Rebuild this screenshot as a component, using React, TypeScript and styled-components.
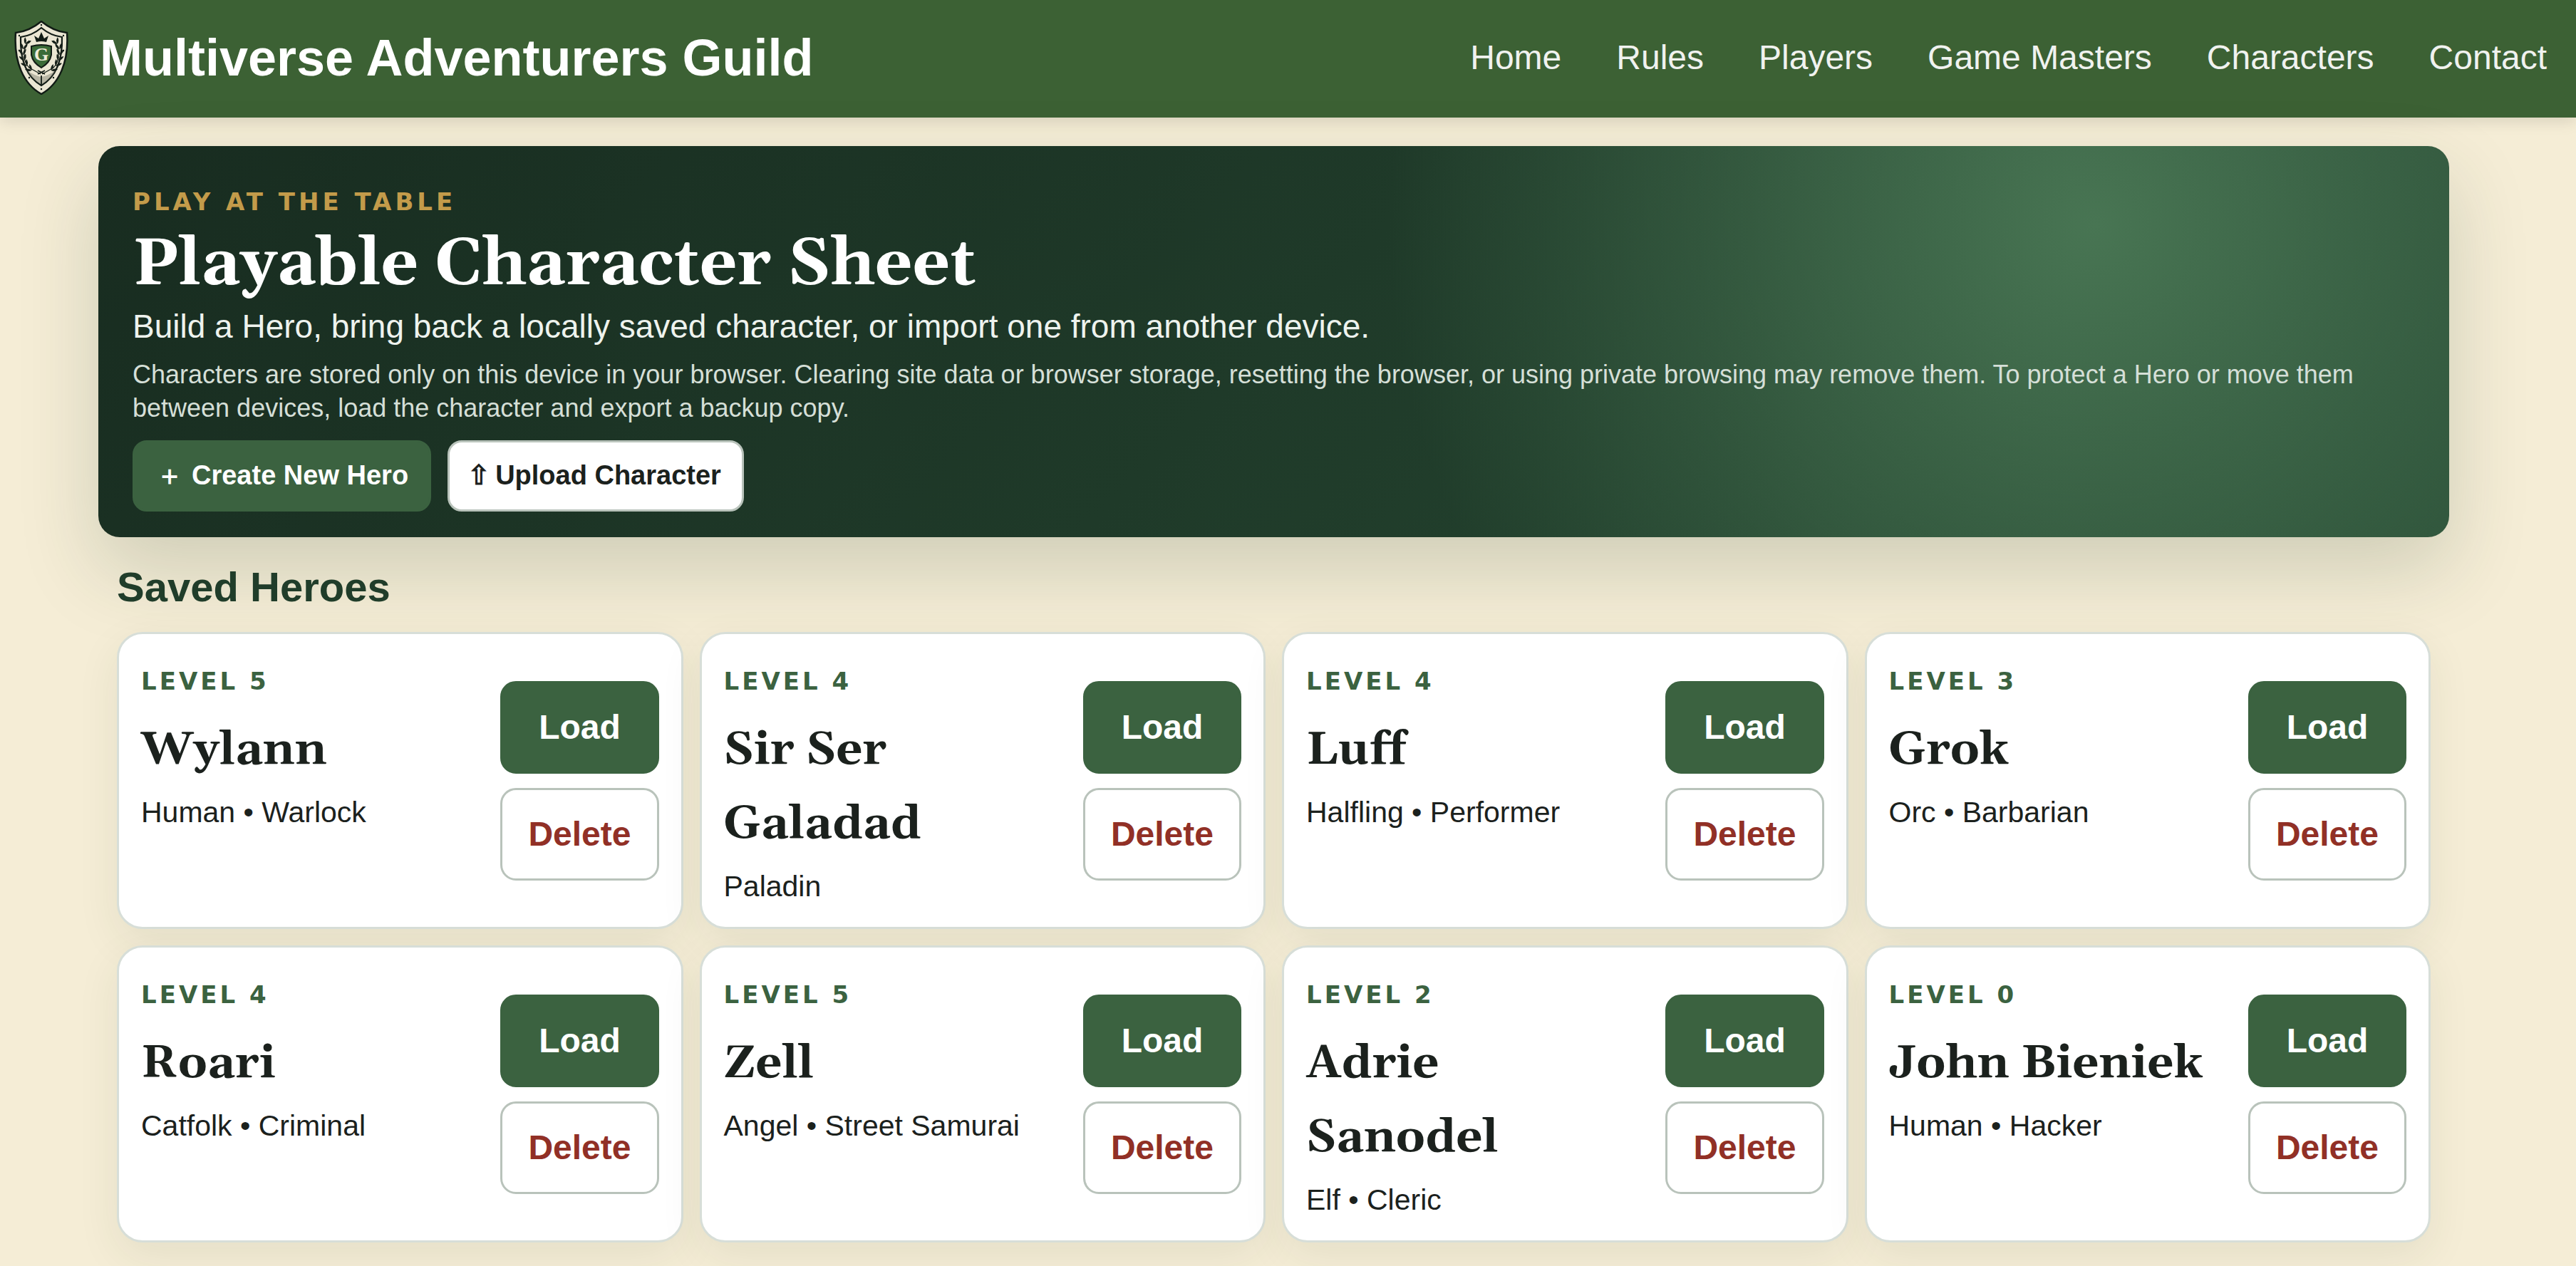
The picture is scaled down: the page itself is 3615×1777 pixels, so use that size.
import React from "react";
import styled, { createGlobalStyle } from "styled-components";

const sans = `"Liberation Sans", Arial, sans-serif`;
const serif = `Georgia, Gelasio, "Liberation Serif", serif`;
const heavy = `"DejaVu Sans", "Liberation Sans", sans-serif`;

const GlobalStyle = createGlobalStyle`
  *, *::before, *::after { box-sizing: border-box; }
  body { margin: 0; background: #f5edd6; color: #1b211d; font-family: ${sans}; font-size: 48px; line-height: 1.6; }
  h1, h2, h3, p { margin: 0; padding: 0; }
`;

const Header = styled.header`
  display: flex;
  align-items: center;
  justify-content: space-between;
  min-height: 165px;
  padding: 0 41px 4px 20px;
  background: #3c6134;
  color: #fff;
  box-shadow: 0 5px 20px rgba(0, 0, 0, 0.12);
`;

const Brand = styled.a`
  display: flex;
  align-items: center;
  gap: 44px;
  color: inherit;
  text-decoration: none;
  font-size: 72px;
  font-weight: 700;
  line-height: 1;
`;

const Nav = styled.nav`
  display: flex;
  gap: 77px;
`;

const NavLink = styled.a`
  color: #f0f2ef;
  text-decoration: none;
  font-size: 48px;
  line-height: 56px;
`;

const Main = styled.main`
  padding: 40px 178px 33px 138px;
`;

const Hero = styled.section`
  padding: 50px 48px 36px;
  border-radius: 30px;
  color: #fff;
  background:
    radial-gradient(circle at 85% 20%, #487553, transparent 35%),
    linear-gradient(135deg, #182c20, #264832);
  box-shadow: 0 45px 112px rgba(32, 61, 42, 0.18);
`;

const Eyebrow = styled.p`
  color: #c39b4a;
  font-family: ${heavy};
  font-size: 34px;
  font-weight: 900;
  line-height: 56px;
  letter-spacing: 5px;
  text-transform: uppercase;
`;

const Title = styled.h1`
  margin-top: 12px;
  font-family: ${serif};
  font-size: 92px;
  line-height: 98px;
`;

const Lead = styled.p`
  color: #eef3ee;
  font-size: 46px;
  line-height: 74px;
`;

const Notice = styled.p`
  margin-top: 7px;
  color: #d5dfd7;
  font-size: 36px;
  line-height: 47px;
`;

const HeroActions = styled.div`
  display: flex;
  gap: 23px;
  margin-top: 22px;
`;

const Button = styled.button<{ $tone: "primary" | "plain" | "danger"; $size: "medium" | "large" }>`
  display: flex;
  align-items: center;
  justify-content: center;
  gap: 11px;
  font-family: inherit;
  font-weight: 700;
  line-height: 1.2;
  border-style: solid;
  border-width: 3px;
  border-radius: ${(p) => (p.$size === "large" ? 22 : 20)}px;
  min-height: ${(p) => (p.$size === "large" ? 130 : 100)}px;
  padding: 0 ${(p) => (p.$size === "large" ? 36 : 29)}px;
  font-size: ${(p) => (p.$size === "large" ? 48 : 38)}px;
  border-color: ${(p) => (p.$tone === "primary" ? "#3b6240" : "#b9c3bb")};
  background: ${(p) => (p.$tone === "primary" ? "#3b6240" : "#fff")};
  color: ${(p) => ({ primary: "#fff", plain: "#1b211d", danger: "#913026" })[p.$tone]};
`;

const Glyph = styled.span<{ $width: number }>`
  display: flex;
  justify-content: center;
  width: ${(p) => p.$width}px;
`;

const Saved = styled.section`
  padding: 24px 26px 0;
`;

const SectionTitle = styled.h2`
  color: #203d2a;
  font-size: 58px;
  line-height: 92px;
`;

const HeroGrid = styled.div`
  display: grid;
  grid-template-columns: repeat(4, minmax(0, 1fr));
  gap: 23px;
  margin-top: 17px;
`;

const Card = styled.article`
  display: grid;
  grid-template-columns: minmax(0, 1fr) auto;
  gap: 36px;
  padding: 24px 31px;
  border: 3px solid #d7ded8;
  border-radius: 36px;
  background: #fff;
  box-shadow: 0 20px 60px rgba(32, 61, 42, 0.08);
`;

const CardText = styled.div`
  padding-top: 14px;
`;

const Level = styled.p`
  color: #3b6240;
  font-family: ${heavy};
  font-size: 34px;
  font-weight: 900;
  line-height: 56px;
  letter-spacing: 4px;
  text-transform: uppercase;
`;

const Name = styled.h3`
  margin-top: 17px;
  font-family: ${serif};
  font-size: 65px;
  line-height: 104px;
`;

const Detail = styled.p`
  margin-top: 2px;
  font-size: 41px;
  line-height: 66px;
`;

const CardActions = styled.div`
  display: grid;
  align-content: center;
  gap: 20px;
`;

const heroes = [
  { level: 5, name: "Wylann", detail: "Human • Warlock" },
  { level: 4, name: "Sir Ser Galadad", detail: "Paladin" },
  { level: 4, name: "Luff", detail: "Halfling • Performer" },
  { level: 3, name: "Grok", detail: "Orc • Barbarian" },
  { level: 4, name: "Roari", detail: "Catfolk • Criminal" },
  { level: 5, name: "Zell", detail: "Angel • Street Samurai" },
  { level: 2, name: "Adrie Sanodel", detail: "Elf • Cleric" },
  { level: 0, name: "John Bieniek", detail: "Human • Hacker" },
];

const leaves = [
  [17, 30, 30], [13, 37, 10], [12, 45, -5], [13, 53, -20], [16, 61, -35], [22, 68, -50],
];

function Laurel() {
  return (
    <g fill="#151f18">
      <path d="M21 28C12 37 11 56 21 66L37 75" fill="none" stroke="#151f18" strokeWidth="1.3" />
      {leaves.map(([x, y, r]) => (
        <g key={y} transform={`translate(${x} ${y}) rotate(${r})`}>
          <path d="M0 3Q-5 1-5-5Q0-3 0 3ZM0 3Q5 1 5-5Q0-3 0 3Z" />
        </g>
      ))}
    </g>
  );
}

function Crest() {
  return (
    <svg width="76" height="104" viewBox="0 0 76 104" aria-hidden="true">
      <path d="M38 1Q55 15 74 17C77 58 63 89 38 103C13 89-1 58 2 17Q21 15 38 1Z" fill="#ebe6d3" stroke="#111b15" strokeWidth="2.5" />
      <path d="M38 10Q51 21 67 23C68 56 58 79 38 91C18 79 8 56 9 23Q25 21 38 10Z" fill="#ebe6d3" stroke="#111b15" strokeWidth="2.2" />
      <path d="M18 70Q28 77 38 79V90Q25 82 18 70ZM58 70Q48 77 38 79V90Q51 82 58 70Z" fill="#8d8c7e" opacity=".55" />
      <g fill="#111b15">
        {[[38, 6], [7, 21], [69, 21], [7, 42], [69, 42], [21, 80], [55, 80], [38, 96]].map(([x, y]) => (
          <circle key={`${x}-${y}`} cx={x} cy={y} r="1.2" />
        ))}
      </g>
      <Laurel />
      <g transform="matrix(-1 0 0 1 76 0)"><Laurel /></g>
      <path d="M24 36Q38 32 52 36V48Q50 59 38 66Q26 59 24 48Z" fill="#3b6b38" stroke="#111b15" strokeWidth="2" />
      <path d="M31 30L28 21L34 25L38 16L42 25L48 21L45 30Q38 28 31 30Z" fill="#111b15" />
      <path d="M38 77V90M33 75L43 70M43 75L33 70" stroke="#111b15" strokeWidth="1.8" />
      <text x="38" y="56" textAnchor="middle" fontFamily="Liberation Serif, serif" fontSize="26" fontWeight="700" fill="#f0ecd9">G</text>
    </svg>
  );
}

export default function App() {
  return (
    <>
      <GlobalStyle />
      <Header>
        <Brand href="#"><Crest />Multiverse Adventurers Guild</Brand>
        <Nav>
          {["Home", "Rules", "Players", "Game Masters", "Characters", "Contact"].map((item) => (
            <NavLink key={item} href="#">{item}</NavLink>
          ))}
        </Nav>
      </Header>
      <Main>
        <Hero>
          <Eyebrow>Play at the table</Eyebrow>
          <Title>Playable Character Sheet</Title>
          <Lead>Build a Hero, bring back a locally saved character, or import one from another device.</Lead>
          <Notice>
            Characters are stored only on this device in your browser. Clearing site data or browser storage, resetting the
            browser, or using private browsing may remove them. To protect a Hero or move them between devices, load the
            character and export a backup copy.
          </Notice>
          <HeroActions>
            <Button $tone="primary" $size="medium"><Glyph $width={40}>＋</Glyph>Create New Hero</Button>
            <Button $tone="plain" $size="medium"><Glyph $width={24}>⇧</Glyph>Upload Character</Button>
          </HeroActions>
        </Hero>
        <Saved>
          <SectionTitle>Saved Heroes</SectionTitle>
          <HeroGrid>
            {heroes.map((hero) => (
              <Card key={hero.name}>
                <CardText>
                  <Level>Level {hero.level}</Level>
                  <Name>{hero.name}</Name>
                  <Detail>{hero.detail}</Detail>
                </CardText>
                <CardActions>
                  <Button $tone="primary" $size="large">Load</Button>
                  <Button $tone="danger" $size="large">Delete</Button>
                </CardActions>
              </Card>
            ))}
          </HeroGrid>
        </Saved>
      </Main>
    </>
  );
}
